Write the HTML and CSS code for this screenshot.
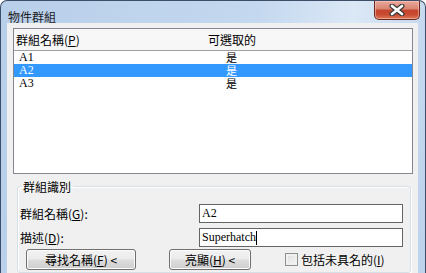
FILE: index.html
```html
<!DOCTYPE html>
<html lang="zh-Hant">
<head>
  <meta charset="UTF-8" />
  <title>物件群組</title>
  <link rel="stylesheet" href="styles.css">
</head>
<body>
  <div class="window">
    <div class="titlebar">
      <span class="title">物件群組</span>
      <button class="close-btn" aria-label="關閉">
        <svg width="16" height="12" viewBox="0 0 16 12">
          <path d="M3 2 L13 10 M13 2 L3 10" stroke="#3b3b3b" stroke-width="5" stroke-linecap="round"/>
          <path d="M3 2 L13 10 M13 2 L3 10" stroke="#ffffff" stroke-width="2.6" stroke-linecap="round"/>
        </svg>
      </button>
    </div>

    <div class="client">
      <div class="listbox">
        <div class="list-header">
          <span class="col-name">群組名稱(<u>P</u>)</span>
          <span class="col-sel">可選取的</span>
        </div>
        <div class="list-row">
          <span class="col-name">A1</span>
          <span class="col-sel">是</span>
        </div>
        <div class="list-row selected">
          <span class="col-name">A2</span>
          <span class="col-sel">是</span>
        </div>
        <div class="list-row">
          <span class="col-name">A3</span>
          <span class="col-sel">是</span>
        </div>
      </div>

      <fieldset class="groupbox">
        <legend>群組識別</legend>
        <div class="field-row">
          <label>群組名稱(<u>G</u>):</label>
          <div class="textbox">A2</div>
        </div>
        <div class="field-row">
          <label>描述(<u>D</u>):</label>
          <div class="textbox">Superhatch<span class="caret"></span></div>
        </div>
        <div class="button-row">
          <button class="btn btn-find">尋找名稱(<u>F</u>) &lt;</button>
          <button class="btn btn-highlight">亮顯(<u>H</u>) &lt;</button>
          <label class="check"><span class="checkbox"></span>包括未具名的(<u>I</u>)</label>
        </div>
      </fieldset>
    </div>
  </div>
</body>
</html>
```

FILE: styles.css
```css
body {
  margin: 0;
  width: 426px;
  height: 273px;
  overflow: hidden;
  font-family: "Noto Sans CJK TC", sans-serif;
  font-size: 12px;
  color: #000;
  background: #fff;
}

.window {
  box-sizing: border-box;
  height: 273px;
  border: 1px solid #3d4f68;
  border-bottom: none;
  border-radius: 7px 7px 0 0;
  background: linear-gradient(100deg, #b8cfea 0%, #c4d8ef 55%, #dbe8f6 75%, #c6d9ef 90%, #bcd2eb 100%);
  padding: 0 7px 0 6px;
  display: flex;
  flex-direction: column;
}

.titlebar {
  height: 22px;
  display: flex;
  align-items: flex-start;
}

.title {
  margin: 9px 0 0 1px;
  line-height: 13px;
  color: #1b1b1b;
}

.close-btn {
  margin-left: auto;
  margin-right: -2px;
  width: 46px;
  height: 19px;
  padding: 0;
  border: 1px solid #6b2a20;
  border-top: none;
  border-radius: 0 0 5px 5px;
  background: linear-gradient(#e9a99c 0%, #d98470 45%, #c4452c 50%, #c94a30 75%, #dc7a5c 100%);
  display: flex;
  align-items: center;
  justify-content: center;
  box-shadow: inset 0 0 0 1px rgba(255, 210, 200, 0.5);
}

.client {
  flex: 1;
  min-height: 0;
  overflow: hidden;
  background: #f0f0f0;
  padding: 5px 5px 0 6px;
}

.listbox {
  box-sizing: border-box;
  width: 400px;
  height: 146px;
  border: 1px solid #828790;
  background: #fff;
  font-family: "Liberation Serif", "Noto Sans CJK TC", serif;
}

.list-header,
.list-row {
  display: grid;
  grid-template-columns: 194px 1fr;
}

.list-header {
  height: 21px;
  line-height: 21px;
  border-bottom: 1px solid #a0a0a0;
  background: #f7f7f7;
  font-family: "Noto Sans CJK TC", sans-serif;
}

.list-header .col-name {
  padding-left: 2px;
}

.list-row {
  height: 13px;
  line-height: 13px;
}

.list-row .col-name {
  padding-left: 5px;
}

.list-row .col-sel {
  padding-left: 18px;
  font-family: "Noto Sans CJK TC", sans-serif;
  font-size: 11px;
  line-height: 13px;
}

.list-row.selected {
  background: #3399ff;
  color: #fff;
}

.groupbox {
  box-sizing: border-box;
  width: 394px;
  margin: 6px 0 0 4px;
  padding: 0 0 2px 0;
  border: 1px solid #d5dfe5;
  border-radius: 3px;
  box-shadow: inset 1px 1px 0 #fff, 1px 1px 0 #fff;
}

.groupbox legend {
  margin-left: 3px;
  padding: 0 2px;
  line-height: 13px;
}

.field-row {
  display: flex;
  align-items: center;
  height: 19px;
  margin: 0 7px 5px 2px;
}

.groupbox legend + .field-row {
  margin-top: 11px;
}

.field-row label {
  flex: 1;
}

.textbox {
  box-sizing: border-box;
  width: 204px;
  height: 19px;
  border: 1px solid #646464;
  background: #fff;
  padding: 0 2px;
  line-height: 17px;
  font-family: "Liberation Serif", serif;
  font-size: 12px;
  display: flex;
  align-items: center;
}

.caret {
  display: inline-block;
  width: 1px;
  height: 14px;
  background: #000;
}

.button-row {
  display: flex;
  align-items: center;
  margin: -3px 0 0 8px;
}

.btn {
  height: 21px;
  padding: 0;
  border: 1px solid #707070;
  border-radius: 3px;
  background: linear-gradient(#f2f2f2 0%, #ebebeb 48%, #dddddd 52%, #cfcfcf 100%);
  box-shadow: inset 0 0 0 1px #fcfcfc;
  font-family: "Noto Sans CJK TC", sans-serif;
  font-size: 12px;
  color: #000;
}

.btn-find {
  width: 110px;
}

.btn-highlight {
  width: 82px;
  margin-left: 33px;
}

.check {
  display: flex;
  align-items: center;
  margin-left: 34px;
}

.checkbox {
  box-sizing: border-box;
  width: 13px;
  height: 13px;
  border: 1px solid #8e8f8f;
  background: linear-gradient(135deg, #dcdcdc, #f6f6f6);
  box-shadow: inset 0 0 0 2px #f0f0f0;
  margin-right: 3px;
}
```
